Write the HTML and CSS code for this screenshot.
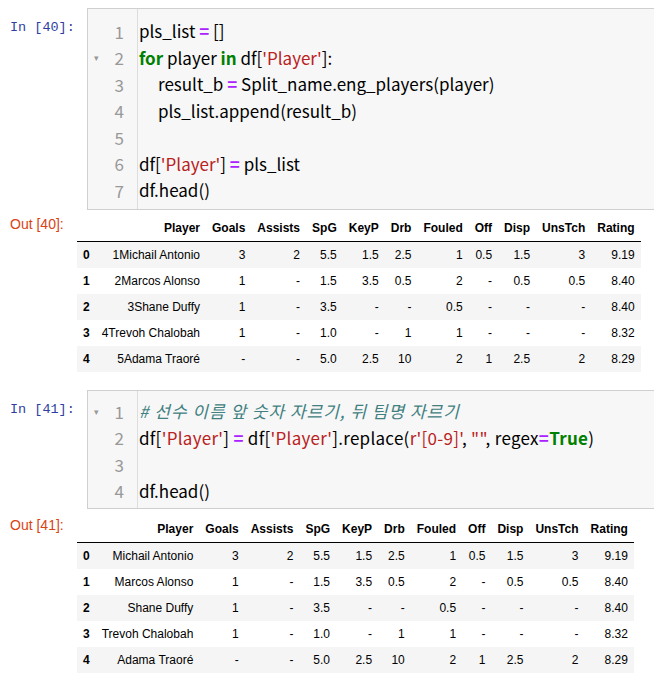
FILE: index.html
```html
<!DOCTYPE html>
<html>
<head>
<meta charset="utf-8">
<link rel="stylesheet" href="styles.css">
</head>
<body>
<div class="nb">
  <div class="in-row first">
    <div class="prompt in">In [40]:</div>
    <div class="editor e1">
      <div class="gutter">
        <div class="gl"><span class="fold"></span><span>1</span></div>
        <div class="gl"><span class="fold">▾</span><span>2</span></div>
        <div class="gl"><span class="fold"></span><span>3</span></div>
        <div class="gl"><span class="fold"></span><span>4</span></div>
        <div class="gl"><span class="fold"></span><span>5</span></div>
        <div class="gl"><span class="fold"></span><span>6</span></div>
        <div class="gl"><span class="fold"></span><span>7</span></div>
      </div>
      <div class="code">
        <div class="cl">pls_list <span class="op">=</span> []</div>
        <div class="cl"><span class="kw">for</span> player <span class="kw">in</span> df[<span class="st">'Player'</span>]:</div>
        <div class="cl ind">result_b <span class="op">=</span> Split_name.eng_players(player)</div>
        <div class="cl ind">pls_list.append(result_b)</div>
        <div class="cl">&nbsp;</div>
        <div class="cl">df[<span class="st">'Player'</span>] <span class="op">=</span> pls_list</div>
        <div class="cl">df.head()</div>
      </div>
    </div>
  </div>
  <div class="out-row o1">
    <div class="prompt out">Out [40]:</div>
    <table class="df">
      <thead>
        <tr><th></th><th>Player</th><th>Goals</th><th>Assists</th><th>SpG</th><th>KeyP</th><th>Drb</th><th>Fouled</th><th>Off</th><th>Disp</th><th>UnsTch</th><th>Rating</th></tr>
      </thead>
      <tbody>
        <tr><th>0</th><td>1Michail Antonio</td><td>3</td><td>2</td><td>5.5</td><td>1.5</td><td>2.5</td><td>1</td><td>0.5</td><td>1.5</td><td>3</td><td>9.19</td></tr>
        <tr><th>1</th><td>2Marcos Alonso</td><td>1</td><td>-</td><td>1.5</td><td>3.5</td><td>0.5</td><td>2</td><td>-</td><td>0.5</td><td>0.5</td><td>8.40</td></tr>
        <tr><th>2</th><td>3Shane Duffy</td><td>1</td><td>-</td><td>3.5</td><td>-</td><td>-</td><td>0.5</td><td>-</td><td>-</td><td>-</td><td>8.40</td></tr>
        <tr><th>3</th><td>4Trevoh Chalobah</td><td>1</td><td>-</td><td>1.0</td><td>-</td><td>1</td><td>1</td><td>-</td><td>-</td><td>-</td><td>8.32</td></tr>
        <tr><th>4</th><td>5Adama Traoré</td><td>-</td><td>-</td><td>5.0</td><td>2.5</td><td>10</td><td>2</td><td>1</td><td>2.5</td><td>2</td><td>8.29</td></tr>
      </tbody>
    </table>
  </div>

  <div class="in-row second">
    <div class="prompt in">In [41]:</div>
    <div class="editor e2">
      <div class="gutter">
        <div class="gl"><span class="fold">▾</span><span>1</span></div>
        <div class="gl"><span class="fold"></span><span>2</span></div>
        <div class="gl"><span class="fold"></span><span>3</span></div>
        <div class="gl"><span class="fold"></span><span>4</span></div>
      </div>
      <div class="code">
        <div class="cl"><span class="cm"># 선수 이름 앞 숫자 자르기, 뒤 팀명 자르기</span></div>
        <div class="cl wide">df[<span class="st">'Player'</span>] <span class="op">=</span> df[<span class="st">'Player'</span>].replace(<span class="st">r'[0-9]'</span>, <span class="st">""</span>, regex<span class="op">=</span><span class="kw">True</span>)</div>
        <div class="cl">&nbsp;</div>
        <div class="cl">df.head()</div>
      </div>
    </div>
  </div>
  <div class="out-row o2">
    <div class="prompt out">Out [41]:</div>
    <table class="df">
      <thead>
        <tr><th></th><th>Player</th><th>Goals</th><th>Assists</th><th>SpG</th><th>KeyP</th><th>Drb</th><th>Fouled</th><th>Off</th><th>Disp</th><th>UnsTch</th><th>Rating</th></tr>
      </thead>
      <tbody>
        <tr><th>0</th><td>Michail Antonio</td><td>3</td><td>2</td><td>5.5</td><td>1.5</td><td>2.5</td><td>1</td><td>0.5</td><td>1.5</td><td>3</td><td>9.19</td></tr>
        <tr><th>1</th><td>Marcos Alonso</td><td>1</td><td>-</td><td>1.5</td><td>3.5</td><td>0.5</td><td>2</td><td>-</td><td>0.5</td><td>0.5</td><td>8.40</td></tr>
        <tr><th>2</th><td>Shane Duffy</td><td>1</td><td>-</td><td>3.5</td><td>-</td><td>-</td><td>0.5</td><td>-</td><td>-</td><td>-</td><td>8.40</td></tr>
        <tr><th>3</th><td>Trevoh Chalobah</td><td>1</td><td>-</td><td>1.0</td><td>-</td><td>1</td><td>1</td><td>-</td><td>-</td><td>-</td><td>8.32</td></tr>
        <tr><th>4</th><td>Adama Traoré</td><td>-</td><td>-</td><td>5.0</td><td>2.5</td><td>10</td><td>2</td><td>1</td><td>2.5</td><td>2</td><td>8.29</td></tr>
      </tbody>
    </table>
  </div>
</div>
</body>
</html>
```

FILE: styles.css
```css
html, body {
  margin: 0;
  padding: 0;
  background: #fff;
  overflow: hidden;
}

.nb {
  width: 656px;
  padding-top: 8px;
}

.in-row {
  display: grid;
  grid-template-columns: 87px 1fr;
}

.in-row.second {
  margin-top: 18px;
}

.out-row {
  display: grid;
  grid-template-columns: 77px auto;
  justify-content: start;
}

.out-row.o1 {
  margin-top: 5px;
}

.out-row.o2 {
  margin-top: 7px;
}

.prompt {
  white-space: pre;
}

.prompt.in {
  font-family: "Liberation Mono", "DejaVu Sans Mono", monospace;
  font-size: 13.5px;
  line-height: 18px;
  color: #303f9f;
  padding-left: 10px;
  padding-top: 11px;
}

.prompt.out {
  font-family: "Liberation Sans", Arial, sans-serif;
  font-size: 14px;
  line-height: 18px;
  color: #d84315;
  padding-left: 10px;
  padding-top: 0px;
}

.editor {
  display: flex;
  background: #f7f7f7;
  border: 1px solid #cfcfcf;
  border-right: none;
}

.gutter {
  width: 49px;
  border-right: 1px solid #dddddd;
  flex: none;
}

.e1 .gutter, .e1 .code {
  padding-top: 9px;
  padding-bottom: 5.5px;
}

.e2 .gutter, .e2 .code {
  padding-top: 7px;
  padding-bottom: 4px;
}

.gl {
  display: flex;
  justify-content: space-between;
  align-items: center;
  height: 26.5px;
  padding: 0 13px 0 6px;
  font-family: "Noto Sans CJK KR", "Noto Sans", sans-serif;
  font-size: 17px;
  color: #999999;
}

.fold {
  font-size: 9px;
  color: #999999;
  width: 8px;
}

.code {
  flex: 1;
  padding-left: 1px;
  font-family: "Noto Sans CJK KR", "Noto Sans", sans-serif;
  font-size: 17px;
  color: #000;
}

.cl {
  height: 26.5px;
  line-height: 26.5px;
  white-space: pre;
}

.cl.ind {
  padding-left: 19px;
}

.cl.wide {
  letter-spacing: 0.28px;
}

.kw {
  color: #008000;
  font-weight: bold;
}

.op {
  color: #aa22ff;
  font-weight: bold;
}

.st {
  color: #ba2121;
}

.cm {
  color: #408080;
  font-style: italic;
  letter-spacing: 1px;
}

table.df {
  border-collapse: collapse;
  border: none;
  font-family: "Liberation Sans", Arial, sans-serif;
  font-size: 12px;
  color: #000;
}

table.df th,
table.df td {
  text-align: right;
  vertical-align: middle;
  padding: 6px 6px;
  line-height: 14px;
  white-space: nowrap;
  border: none;
}

table.df th {
  font-weight: bold;
}

table.df tbody th {
  text-align: left;
}

table.df thead tr {
  border-bottom: 1px solid #000;
}

table.df tbody tr:nth-child(odd) {
  background: #f5f5f5;
}
```
